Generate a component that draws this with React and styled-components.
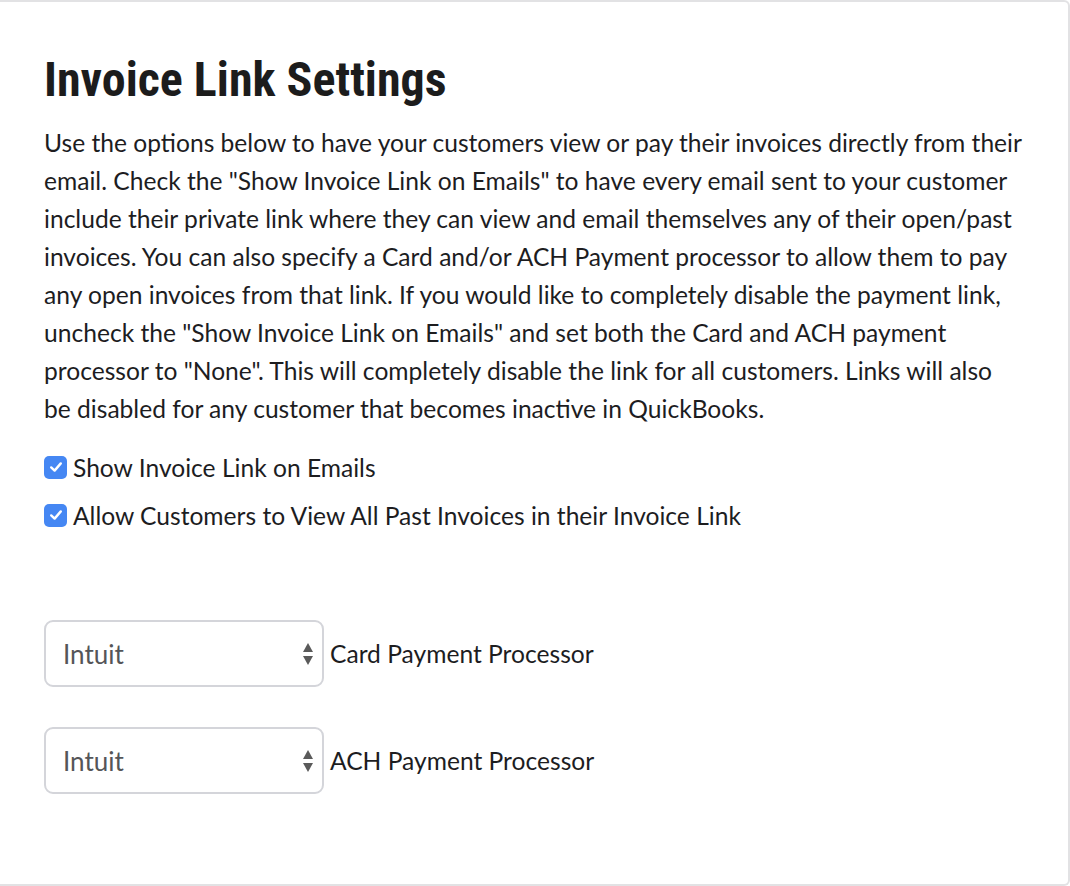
import styled, { createGlobalStyle } from 'styled-components'

const GlobalStyle = createGlobalStyle`
    html, body {
        margin: 0;
        padding: 0;
        background: #ffffff;
    }
    body {
        font-family: Lato, 'Open Sans', sans-serif;
        color: #1d1d1f;
    }
`

const Card = styled.div`
    box-sizing: border-box;
    width: 1070px;
    height: 886px;
    border: 2px solid #e2e2e4;
    border-left: none;
    border-radius: 0 6px 6px 0;
    padding: 51px 0 0 44px;
    background: #fff;
`

const Title = styled.h1`
    margin: 0 0 17px;
    font-family: 'Roboto Condensed', Roboto, sans-serif;
    font-weight: 700;
    font-size: 48px;
    line-height: 54px;
    color: #1c1c1c;
`

const Description = styled.p`
    margin: 0 0 15px;
    font-size: 24.6px;
    line-height: 38px;
    white-space: nowrap;
`

const CheckRow = styled.label`
    display: flex;
    align-items: center;
    gap: 6px;
    height: 48px;
    font-size: 24.6px;
`

const Box = styled.span`
    display: flex;
    align-items: center;
    justify-content: center;
    width: 23px;
    height: 23px;
    border-radius: 5px;
    background: #4587f3;
`

const Processors = styled.div`
    display: flex;
    flex-direction: column;
    gap: 40px;
    margin-top: 81px;
`

const SelectRow = styled.div`
    display: flex;
    align-items: center;
    gap: 6px;
    font-size: 24.6px;
`

const SelectBox = styled.div`
    box-sizing: border-box;
    display: flex;
    align-items: center;
    justify-content: space-between;
    width: 280px;
    height: 67px;
    padding: 0 8px 0 17px;
    border: 2px solid #d4d5da;
    border-radius: 9px;
    font-size: 26px;
    color: #555558;
`

const Arrows = styled.svg`
    width: 12px;
    height: 24px;
`

function Check() {
    return (
        <Box>
            <svg width='16' height='16' viewBox='0 0 16 16'>
                <path d='M3.2 8.4 L6.6 11.6 L12.8 4.4' fill='none' stroke='#fff' strokeWidth='2.4' strokeLinecap='round' strokeLinejoin='round' />
            </svg>
        </Box>
    )
}

function Select({ value, label }) {
    return (
        <SelectRow>
            <SelectBox>
                <span>{value}</span>
                <Arrows viewBox='0 0 12 24'>
                    <path d='M6 1 L11 10 L1 10 Z' fill='#5a5a5a' />
                    <path d='M1 14 L11 14 L6 23 Z' fill='#5a5a5a' />
                </Arrows>
            </SelectBox>
            <span>{label}</span>
        </SelectRow>
    )
}

export default function App() {
    return (
        <>
            <GlobalStyle />
            <Card>
                <Title>Invoice Link Settings</Title>
                <Description>
                    Use the options below to have your customers view or pay their invoices directly from their
                    <br />
                    email. Check the "Show Invoice Link on Emails" to have every email sent to your customer
                    <br />
                    include their private link where they can view and email themselves any of their open/past
                    <br />
                    invoices. You can also specify a Card and/or ACH Payment processor to allow them to pay
                    <br />
                    any open invoices from that link. If you would like to completely disable the payment link,
                    <br />
                    uncheck the "Show Invoice Link on Emails" and set both the Card and ACH payment
                    <br />
                    processor to "None". This will completely disable the link for all customers. Links will also
                    <br />
                    be disabled for any customer that becomes inactive in QuickBooks.
                </Description>
                <CheckRow>
                    <Check />
                    Show Invoice Link on Emails
                </CheckRow>
                <CheckRow>
                    <Check />
                    Allow Customers to View All Past Invoices in their Invoice Link
                </CheckRow>
                <Processors>
                    <Select value='Intuit' label='Card Payment Processor' />
                    <Select value='Intuit' label='ACH Payment Processor' />
                </Processors>
            </Card>
        </>
    )
}
